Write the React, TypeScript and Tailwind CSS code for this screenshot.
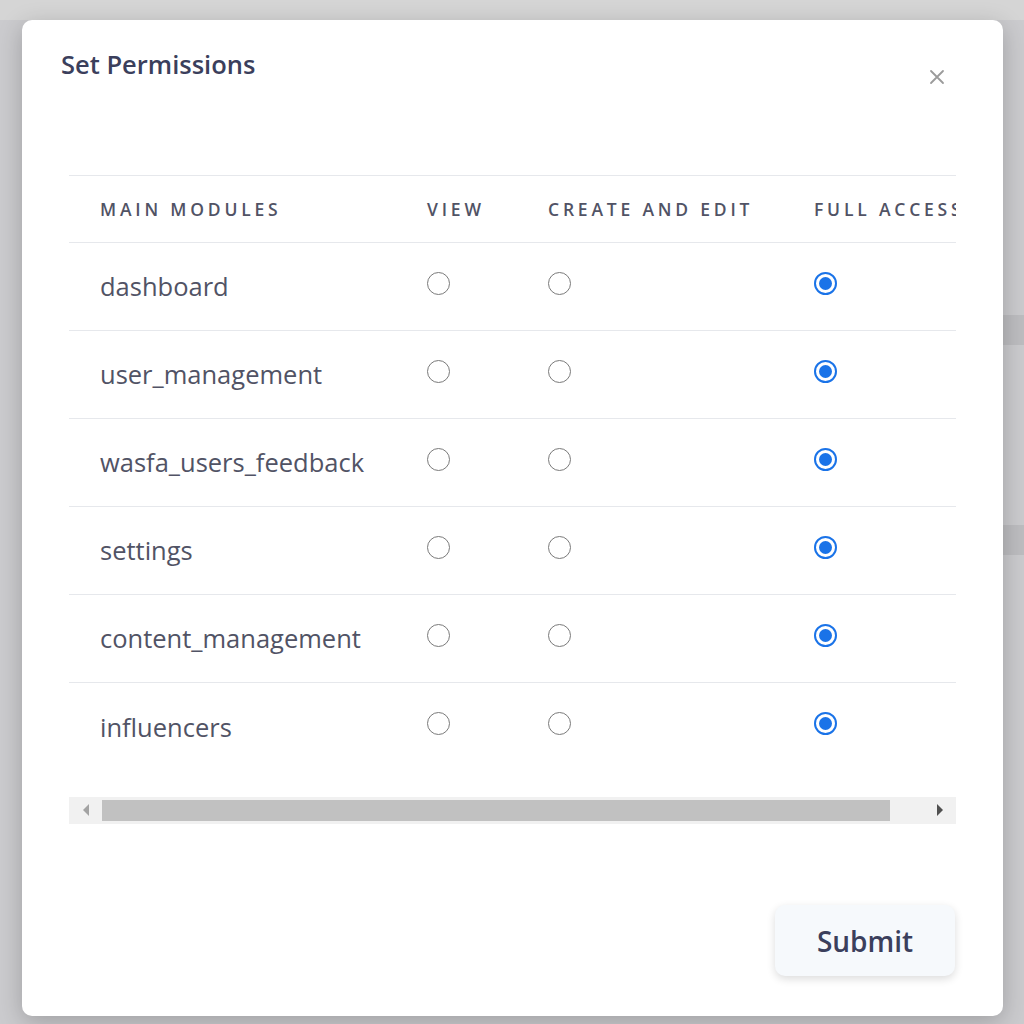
import React from "react";

const MODULES = [
  "dashboard",
  "user_management",
  "wasfa_users_feedback",
  "settings",
  "content_management",
  "influencers",
];

function Radio({ checked }: { checked?: boolean }) {
  if (checked) {
    return (
      <span className="flex h-[23px] w-[23px] items-center justify-center rounded-full border-2 border-[#1a73e8] bg-white">
        <span className="h-[13px] w-[13px] rounded-full bg-[#1a73e8]" />
      </span>
    );
  }
  return <span className="block h-[23px] w-[23px] rounded-full border-[1.6px] border-[#7a7a7a] bg-white" />;
}

export default function App() {
  return (
    <div
      className="relative h-[1024px] w-full overflow-hidden bg-[#cbcbce] pl-[22px] pt-[20px]"
      style={{ fontFamily: '"Open Sans", "Noto Sans", sans-serif' }}
    >
      {/* backdrop blocks */}
      <div className="absolute left-0 top-0 h-[20px] w-full bg-[#d5d5d5]" />
      <div className="absolute right-0 top-[315px] h-[30px] w-[21px] bg-[#bdbdc0]" />
      <div className="absolute right-0 top-[525px] h-[30px] w-[21px] bg-[#bdbdc0]" />

      <div className="relative flex h-[996px] w-[981px] flex-col rounded-[10px] bg-white shadow-[0_6px_24px_rgba(0,0,0,0.22)]">
        <div className="flex items-start justify-between pl-[39px] pr-[58px] pt-[26px]">
          <h2 className="text-[25.5px] font-semibold leading-[36px] text-[#3b3f5c]">Set Permissions</h2>
          <button className="mt-[23px] text-[#9b9b9b]">
            <svg width="16" height="16" viewBox="0 0 16 16">
              <path d="M2 2 L14 14 M14 2 L2 14" stroke="#9b9b9b" strokeWidth="1.8" strokeLinecap="round" />
            </svg>
          </button>
        </div>

        <div className="ml-[47px] mt-[90px] w-[887px]">
          <div className="overflow-hidden">
            <table className="w-[962px] border-collapse text-left">
              <thead>
                <tr className="h-[67px] border-y border-[#e6e8ec]">
                  {["Main Modules", "View", "Create and Edit", "Full Access"].map((h, i) => (
                    <th
                      key={h}
                      className={
                        "whitespace-nowrap pl-[31px] text-[17.5px] font-semibold uppercase tracking-[3.8px] text-[#515365] " +
                        (i === 0 ? "w-[327px]" : i === 1 ? "w-[121px]" : i === 2 ? "w-[266px]" : "")
                      }
                    >
                      {h}
                    </th>
                  ))}
                </tr>
              </thead>
              <tbody>
                {MODULES.map((m, idx) => (
                  <tr
                    key={m}
                    className={"h-[88px] " + (idx < MODULES.length - 1 ? "border-b border-[#e6e8ec]" : "")}
                  >
                    <td className="pl-[31px] text-[25.5px] text-[#515365]">{m}</td>
                    <td className="pb-[6px] pl-[31px]">
                      <Radio />
                    </td>
                    <td className="pb-[6px] pl-[31px]">
                      <Radio />
                    </td>
                    <td className="pb-[6px] pl-[31px]">
                      <Radio checked />
                    </td>
                  </tr>
                ))}
              </tbody>
            </table>
          </div>

          {/* horizontal scrollbar */}
          <div className="mt-[26px] flex h-[27px] items-center bg-[#f1f1f1]">
            <div className="flex h-full w-[33px] items-center justify-center">
              <svg width="8" height="12" viewBox="0 0 8 12">
                <path d="M7 0 L1 6 L7 12 Z" fill="#a3a3a3" />
              </svg>
            </div>
            <div className="h-[21px] w-[788px] bg-[#c1c1c1]" />
            <div className="flex h-full flex-1 items-center justify-end pr-[12px]">
              <svg width="8" height="12" viewBox="0 0 8 12">
                <path d="M1 0 L7 6 L1 12 Z" fill="#505050" />
              </svg>
            </div>
          </div>
        </div>

        <div className="mt-auto flex justify-end pb-[40px] pr-[48px]">
          <button className="h-[71px] w-[180px] rounded-[10px] bg-[#f6f9fc] text-[28px] font-semibold text-[#3b3f5c] shadow-[0_3px_8px_rgba(0,0,0,0.14)]">
            Submit
          </button>
        </div>
      </div>
    </div>
  );
}
